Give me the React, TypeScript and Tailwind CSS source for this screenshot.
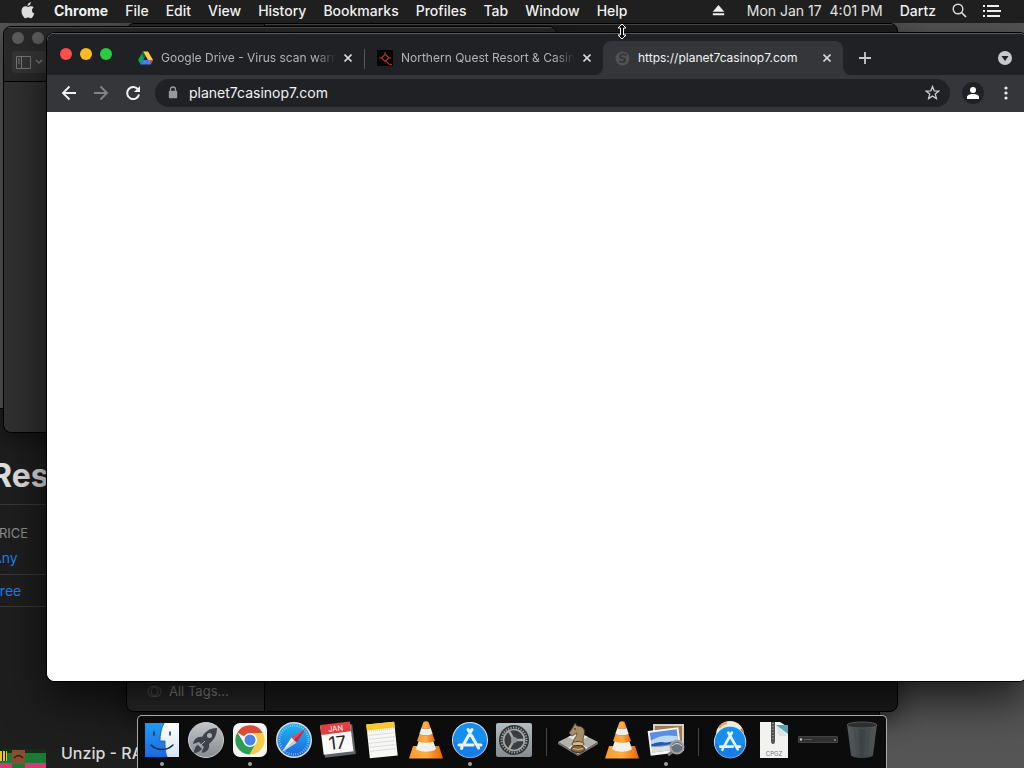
import type { ReactNode } from "react";

const menus = ["File", "Edit", "View", "History", "Bookmarks", "Profiles", "Tab", "Window", "Help"];

function MenuBar() {
  return (
    <header className="relative z-20 flex h-[23px] items-center justify-between bg-[#1f1f1f] pb-[2px] text-[14px] leading-none font-medium text-[#f0f0f0]">
      <nav className="flex items-center gap-[17px] pl-[21px]" aria-label="Menu bar">
        <button aria-label="Apple menu" className="mr-[2px] flex">
          <svg width="14" height="17" viewBox="0 0 14 17" fill="#dedede">
            <path d="M9.800.2c.1 1-.3 1.900-.9 2.600-.6.700-1.500 1.200-2.300 1.100-.1-.9.300-1.900.9-2.500C8.100.7 9.100.3 9.800.2zM12.700 5.600c-1 .6-1.700 1.600-1.700 2.900 0 1.500.9 2.600 2.300 3.100-.3 1-.8 1.900-1.400 2.800-.6.9-1.300 1.800-2.300 1.800s-1.300-.6-2.400-.6-1.500.6-2.500.6-1.700-.9-2.300-1.800C.9 12.600.2 9.700.7 7.700 1.100 5.700 2.600 4.300 4.300 4.300c1.100 0 1.900.7 2.900.7.900 0 1.700-.8 3.100-.7.900 0 1.800.5 2.400 1.300z" />
          </svg>
        </button>
        <button className="font-bold">Chrome</button>
        {menus.map((m) => (
          <button key={m}>{m}</button>
        ))}
      </nav>
      <div className="flex items-center pr-[23px]">
        <button aria-label="Eject" className="mr-[22px]">
          <svg width="13" height="11" viewBox="0 0 13 11" fill="#eee">
            <path d="M6.500 0 12.300 6.700H.7zM.8 8.300h11.400v2H.8z" />
          </svg>
        </button>
        <time className="mr-[17px] font-normal whitespace-pre text-[#e4e4e4]">Mon Jan 17  4:01 PM</time>
        <button className="mr-4">Dartz</button>
        <button aria-label="Search" className="mr-4">
          <svg width="15" height="15" viewBox="0 0 15 15" fill="none" stroke="#ddd" strokeWidth="1.400">
            <circle cx="6" cy="6" r="4.800" />
            <path d="m9.500 9.500 4.500 4.500" strokeWidth="1.700" />
          </svg>
        </button>
        <button aria-label="Notification Center">
          <svg width="18" height="12" viewBox="0 0 18 12" fill="#eee">
            <path d="M0 0h2v2H0zM0 5h2v2H0zM0 10h2v2H0zM4 0h12v2H4zM4 5h14v2H4zM4 10h13v2H4z" />
          </svg>
        </button>
      </div>
    </header>
  );
}

function StoreWindow() {
  return (
    <section className="absolute top-[408px] -bottom-10 -left-10 w-[920px] border border-black bg-[#1e1e1e] pt-[46px]">
      <h1 className="h-[49px] pl-[30px] text-[32px] leading-[42px] font-bold text-[#e0e0e0]">Res</h1>
      <div className="border-t border-[#383838] pt-5">
        <h2 className="pl-[38px] text-[13px] leading-4 text-[#8e8e90]">RICE</h2>
      </div>
      <div className="flex h-[34px] items-center border-b border-[#383838] pl-[31px] text-[14px] text-[#1f7ff0]">
        <a href="#any">Any</a>
      </div>
      <div className="flex h-[32px] items-center border-b border-[#383838] pl-[31px] text-[14px] text-[#1f7ff0]">
        <a href="#free">Free</a>
      </div>
      <div className="mt-[130px] flex">
        <svg className="mt-3 ml-[39px]" width="46" height="40" viewBox="0 0 46 40">
          <path fill="#1d7a35" d="M0 0h46v40H0z" />
          <path fill="#132d19" d="M0 0h46v4H0z" />
          <path fill="#e7c61e" d="M0 2h7v10H0z" />
          <path fill="#191510" d="M2 2h1v10H2zm3 0h1v10H5z" />
          <path fill="#8a4c32" d="M12 1h13v14H12z" />
          <path d="M14 9q5-5 9 0" stroke="#42190d" strokeWidth="1.500" fill="none" />
          <path fill="#d33c73" d="M0 14h12v6H0zm25 0h21v6H25z" />
        </svg>
        <p className="ml-[15px] text-[16px] leading-8 font-medium text-[#d9d9d9]">Unzip - RAR</p>
      </div>
    </section>
  );
}

function FinderWindow() {
  return (
    <section className="absolute top-[23px] bottom-[56px] left-[126px] flex w-[772px] overflow-hidden rounded-lg border border-black bg-[#1d1d1d] shadow-[0_8px_24px_rgba(0,0,0,0.5)]">
      <aside className="flex w-[138px] flex-col justify-end border-r border-black bg-[#292929] pb-[10px] pl-5">
        <button className="flex items-center gap-[7px] text-[13px] leading-5 text-[#8d8d8d]">
          <svg width="15" height="15" viewBox="0 0 15 15" fill="none" stroke="#5c5c5c">
            <circle cx="6" cy="7.500" r="5" />
            <circle cx="9" cy="7.500" r="5" />
          </svg>
          All Tags...
        </button>
      </aside>
      <div className="flex-1 border-t border-[#4a4a4a]" />
    </section>
  );
}

function PreviewWindow() {
  return (
    <section className="absolute top-[26px] left-[3px] h-[407px] w-[554px] overflow-hidden rounded-lg border border-black bg-[#303030] shadow-[0_8px_20px_rgba(0,0,0,0.4)]">
      <div className="h-[55px] border-t border-b border-t-[#505050] border-b-black bg-[#292929] pl-2">
        <div className="flex gap-2 pt-1">
          <span className="size-3 rounded-full bg-[#5b5b5b]" />
          <span className="size-3 rounded-full bg-[#5b5b5b]" />
        </div>
        <button aria-label="Sidebar" className="mt-[7px] flex h-[22px] w-[60px] items-center gap-1 rounded-sm bg-[#343434] pl-1 text-[#777]">
          <svg width="15" height="13" viewBox="0 0 15 13" fill="none" stroke="currentColor">
            <path d="M.5.5h14v12H.5zM5.500.5v12M2 3h2M2 5h2M2 7h2" />
          </svg>
          <svg width="8" height="6" viewBox="0 0 8 6" fill="none" stroke="currentColor" strokeWidth="1.500">
            <path d="m1 1 3 3 3-3" />
          </svg>
        </button>
      </div>
    </section>
  );
}

function DriveIcon() {
  return (
    <svg className="shrink-0" width="15" height="14" viewBox="0 0 15 14">
      <path fill="#16a05d" d="M5 .5 0 9l2.500 4.500L7.500 5z" />
      <path fill="#ffcf48" d="M5 .5h5l5 8.500h-5z" />
      <path fill="#4080f0" d="M5 9h10l-2.500 4.500h-10z" />
      <path fill="#e94235" d="M12 9h3l-2.500 4.500z" />
      <path fill="#0d6c3d" d="M5 .5 7.500 5 6 7.500 3.500 3z" />
    </svg>
  );
}

function QuestIcon() {
  return (
    <svg className="shrink-0" width="16" height="16" viewBox="0 0 16 16" fill="none">
      <path fill="#080404" d="M0 0h16v16H0z" />
      <path stroke="#a8392c" strokeWidth="1.200" d="M8 2v2.500L4.500 8 8 11.500 12 8 8.500 4.500M2 8h2.500M11.500 8H14M7 10.500c2 0 3 1 4 2.500.8 1.200 2 1.800 4 1.500" />
    </svg>
  );
}

function LoadingIcon() {
  return (
    <svg className="shrink-0" width="15" height="15" viewBox="0 0 15 15">
      <circle cx="7.500" cy="7.500" r="7" fill="#505255" />
      <path d="M11.500 4.500C8 2 3.500 4 5.500 6.300c1.500 1 4 .8 4.500 2.200.6 2-3 3.500-6 1.500" fill="none" stroke="#34363a" strokeWidth="2" />
    </svg>
  );
}

function Tab({ icon, title, active = false, fade = true }: { icon: ReactNode; title: string; active?: boolean; fade?: boolean }) {
  return (
    <div className={active ? "relative flex h-full w-[240px] min-w-0 items-center rounded-t-lg bg-[#35363a] pr-2 pl-3 text-[#f1f3f4]" : "flex h-full w-[238px] min-w-0 items-center pr-2 pl-3 text-[#b0b3b8]"}>
      {active && (
        <>
          <svg className="absolute bottom-0 -left-2" width="8" height="8" viewBox="0 0 8 8" fill="#35363a"><path d="M8 0v8H0a8 8 0 0 0 8-8z" /></svg>
          <svg className="absolute -right-2 bottom-0" width="8" height="8" viewBox="0 0 8 8" fill="#35363a"><path d="M0 0v8h8a8 8 0 0 1-8-8z" /></svg>
        </>
      )}
      <button role="tab" aria-selected={active} className="flex min-w-0 flex-1 items-center gap-2 text-left text-[12px] leading-4">
        {icon}
        <span className={fade ? "min-w-0 flex-1 overflow-hidden whitespace-nowrap [mask-image:linear-gradient(to_right,black_88%,transparent)]" : "min-w-0 flex-1 overflow-hidden whitespace-nowrap"}>{title}</span>
      </button>
      <button aria-label={"Close " + title} className="ml-1 flex size-4 shrink-0 items-center justify-center">
        <svg width="8" height="8" viewBox="0 0 8 8" stroke="#d5d7da" strokeWidth="1.600"><path d="m.5.5 7 7m0-7-7 7" /></svg>
      </button>
    </div>
  );
}

function ChromeWindow() {
  return (
    <main className="absolute top-[33px] -right-[3px] bottom-[87px] left-[47px] flex flex-col overflow-hidden rounded-[8px] bg-white shadow-[0_0_0_1px_#000,0_18px_45px_rgba(0,0,0,0.7)]">
      <div className="flex h-[42px] shrink-0 border-t border-[#55575a] bg-[#202124] pr-[15px]">
        <div className="flex w-[79px] shrink-0 gap-2 pt-[14px] pl-[13px]">
          <button aria-label="Close window" className="size-3 rounded-full bg-[#fc4f50]" />
          <button aria-label="Minimize window" className="size-3 rounded-full bg-[#fdbb22]" />
          <button aria-label="Zoom window" className="size-3 rounded-full bg-[#2bcb42]" />
        </div>
        <div role="tablist" className="flex min-w-0 items-stretch pt-[7px]">
          <Tab icon={<DriveIcon />} title="Google Drive - Virus scan warning" />
          <div className="mt-2 h-5 w-px shrink-0 bg-[#55575b]" />
          <Tab icon={<QuestIcon />} title="Northern Quest Resort & Casino" />
          <Tab icon={<LoadingIcon />} title="https://planet7casinop7.com" active fade={false} />
        </div>
        <button aria-label="New tab" className="ml-3 flex w-5 items-center justify-center pt-[7px]">
          <svg width="12" height="12" viewBox="0 0 12 12" stroke="#c8cacd" strokeWidth="1.800"><path d="M6 0v12M0 6h12" /></svg>
        </button>
        <button aria-label="Search tabs" className="ml-auto flex items-center pt-[7px]">
          <svg width="14" height="14" viewBox="0 0 14 14"><circle cx="7" cy="7" r="7" fill="#c7c9cc" /><path fill="#202124" d="M3.500 5h7L7 10z" /></svg>
        </button>
      </div>
      <div className="flex h-[37px] shrink-0 items-center bg-[#35363a] pr-3 pb-[2px] pl-[14px]">
        <button aria-label="Back" className="mr-4 shrink-0">
          <svg width="16" height="16" viewBox="0 0 16 16" fill="none" stroke="#f0f1f2" strokeWidth="1.900"><path d="M15 8H2M8.500 1.500 2 8l6.500 6.500" /></svg>
        </button>
        <button aria-label="Forward" className="mr-4 shrink-0">
          <svg width="16" height="16" viewBox="0 0 16 16" fill="none" stroke="#808286" strokeWidth="1.900"><path d="M1 8h13M7.500 1.500 14 8l-6.500 6.500" /></svg>
        </button>
        <button aria-label="Reload" className="mr-[14px] shrink-0">
          <svg width="16" height="16" viewBox="0 0 16 16" fill="none" stroke="#f0f1f2" strokeWidth="2"><path d="M13.200 4.800A6 6 0 1 0 14 9.500" /><path fill="#f0f1f2" stroke="none" d="M15 1v6H9z" /></svg>
        </button>
        <div className="flex h-7 min-w-0 flex-1 items-center rounded-full bg-[#202124] pr-[10px] pl-[13px]">
          <svg className="shrink-0" width="10" height="13" viewBox="0 0 10 13" fill="none"><path stroke="#96999e" strokeWidth="1.300" d="M2.500 6V3.500a2.500 2.500 0 0 1 5 0V6" /><rect x=".8" y="4.800" width="8.400" height="7.400" rx="1" fill="#96999e" /></svg>
          <input aria-label="Address and search bar" defaultValue="planet7casinop7.com" className="ml-[11px] min-w-0 flex-1 bg-transparent text-[14px] leading-5 text-[#f1f3f4] outline-none" />
          <button aria-label="Bookmark this page" className="shrink-0">
            <svg width="15" height="15" viewBox="0 0 15 15" fill="none" stroke="#c8cacd" strokeWidth="1.300"><path d="m7.500 1.500 1.700 4.300 4.600.3-3.500 3 1.100 4.400-3.900-2.400-3.900 2.400 1.100-4.400-3.500-3 4.600-.3z" /></svg>
          </button>
        </div>
        <button aria-label="Profile" className="ml-3 flex size-[22px] shrink-0 items-center justify-center rounded-full bg-[#202124]">
          <svg width="12" height="12" viewBox="0 0 12 12" fill="#fff"><circle cx="6" cy="3" r="3" /><path d="M0 12v-2c0-2 3-3 6-3s6 1 6 3v2z" /></svg>
        </button>
        <button aria-label="Chrome menu" className="mr-[7px] ml-5 shrink-0">
          <svg width="4" height="14" viewBox="0 0 4 14" fill="#eee"><circle cx="2" cy="2" r="1.600" /><circle cx="2" cy="7" r="1.600" /><circle cx="2" cy="12" r="1.600" /></svg>
        </button>
      </div>
      <div className="flex-1 bg-white" />
    </main>
  );
}

const Finder = () => (
  <svg width="38" height="38" viewBox="0 0 38 38">
    <defs><linearGradient id="fb" x2="0" y2="1"><stop stopColor="#1f9bf4" /><stop offset="1" stopColor="#1b6be0" /></linearGradient><linearGradient id="fw" x2="0" y2="1"><stop stopColor="#fff" /><stop offset="1" stopColor="#d5e4f0" /></linearGradient></defs>
    <path fill="url(#fw)" d="M2 2h34v34H2z" />
    <path fill="url(#fb)" d="M2 2h19c-3 6-4 12-4 18h5c0 6 0 11 2 16H2z" />
    <path fill="none" stroke="#172c4a" strokeWidth="1.500" strokeLinecap="round" d="M11 11v3M27 11v3M8 24c6 6 16 6 22 0" />
    <path fill="none" stroke="#1b558f" strokeWidth=".8" d="M21 2c-3 6-4 12-4 18h5c0 6 0 11 2 16" />
  </svg>
);

const Launchpad = () => (
  <svg width="38" height="38" viewBox="0 0 38 38">
    <defs><linearGradient id="lp" x2="0" y2="1"><stop stopColor="#c2c6ca" /><stop offset="1" stopColor="#878b90" /></linearGradient></defs>
    <circle cx="19" cy="19" r="17.500" fill="url(#lp)" stroke="#c9ccd0" />
    <path fill="#3d4349" d="M30 7c-8 0-12 4-15 9-4-1-8 2-9 7l6-2 5 5c-1 2-2 4-2 6 5-1 8-4 7-9 5-4 8-9 8-16z" />
    <path fill="#3d4349" d="M11 24c-3 1-4 5-4 8 3 0 6-2 8-4z" />
    <circle cx="22.500" cy="14.500" r="2.500" fill="#a9aeb3" />
    <path stroke="#a9aeb3" d="m13 25 5-5" />
  </svg>
);

const Chrome = () => (
  <svg width="38" height="38" viewBox="0 0 38 38">
    <rect x="2" y="2" width="34" height="34" rx="7" fill="#f7f5f2" />
    <path fill="#dc4a38" d="M19 19 6.400 11.500A14.500 14.500 0 0 1 31.700 12H19z" />
    <path fill="#f6cc46" d="M31.700 12A14.500 14.500 0 0 1 18.500 33.500L25 22 19 12z" />
    <path fill="#2c9c56" d="M6.400 11.500A14.500 14.500 0 0 0 18.500 33.500L25 22l-12 0z" />
    <circle cx="19" cy="19" r="7" fill="#fff" /><circle cx="19" cy="19" r="5.500" fill="#4583ee" />
  </svg>
);

const Safari = () => (
  <svg width="38" height="38" viewBox="0 0 38 38">
    <defs><linearGradient id="sf" x2="0" y2="1"><stop stopColor="#22b6f4" /><stop offset="1" stopColor="#1c66db" /></linearGradient></defs>
    <circle cx="19" cy="19" r="18" fill="#dadde0" /><circle cx="19" cy="19" r="16.500" fill="url(#sf)" />
    <circle cx="19" cy="19" r="14.500" fill="none" stroke="#9ddaf7" strokeWidth="2" strokeDasharray=".7 1.578" />
    <path fill="#f5f5f5" d="m7 31 9.500-14.500 5 5z" /><path fill="#c9ced3" d="m7 31 12-12 2.500 2.500z" />
    <path fill="#f04848" d="M31 7 16.500 16.500 19 19z" /><path fill="#ce2432" d="M31 7 21.500 21.500 19 19z" />
  </svg>
);

const Calendar = () => (
  <svg width="38" height="38" viewBox="0 0 38 38">
    <g transform="rotate(-7 19 19)">
      <path fill="#606367" d="M4 5h31v30H4z" /><path fill="#fafafa" d="M3 3h30v29H3z" /><path fill="#df3e42" d="M3 2h30v10H3z" />
      <text x="18" y="10" textAnchor="middle" fontSize="7.500" fill="#fff" fontFamily="Inter, sans-serif">JAN</text>
      <text x="18" y="28" textAnchor="middle" fontSize="18" fill="#252525" fontFamily="Inter, sans-serif">17</text>
    </g>
  </svg>
);

const Notes = () => (
  <svg width="38" height="38" viewBox="0 0 38 38">
    <g transform="rotate(-6 19 19)"><path fill="#f7f7f4" d="M5 2h28v34H5z" /><path fill="#f7c92d" d="M5 2h28v6H5z" /><path stroke="#d1d2d0" strokeWidth=".7" d="M6 13h26M6 17h26M6 21h26M6 25h26M6 29h26" /><path stroke="#d8cfa8" strokeDasharray="1 1" d="M5 9h28" /></g>
  </svg>
);

const Cone = ({ id }: { id: string }) => (
  <svg width="38" height="38" viewBox="0 0 38 38">
    <defs><linearGradient id={id}><stop stopColor="#f89932" /><stop offset=".5" stopColor="#ffae45" /><stop offset="1" stopColor="#e66508" /></linearGradient></defs>
    <path fill={"url(#" + id + ")"} d="M6 25h26l4 12.500H2z" />
    <path fill="#f1f0eb" d="M13.500 15h11L29 28c-4 3.500-16 3.500-20 0z" />
    <path fill={"url(#" + id + ")"} d="M16.500 1q2.500-1.500 5 0l2.200 6q-4.700 2-9.400 0zM12.500 13q6.500 3 13 0l2.500 7q-9 4-18 0z" />
    <path fill="#eeeeea" d="M14.300 7q4.700 2 9.400 0l2 6q-6.700 3-13.400 0z" />
  </svg>
);

const AppStore = ({ badge = false }: { badge?: boolean }) => (
  <svg width="38" height="38" viewBox="0 0 38 38">
    {badge && <><circle cx="19" cy="14" r="14" fill="#eee9dc" /><path d="M8 7a13 13 0 0 1 8-5" fill="none" stroke="#e6a149" strokeWidth="2" /><path d="M30 8a13 13 0 0 1 2 5" fill="none" stroke="#d8583f" strokeWidth="2" /></>}
    <g transform={badge ? "translate(2 4) scale(.9)" : undefined}>
      <circle cx="19" cy="19" r="18" fill="#d8e8f5" /><circle cx="19" cy="19" r="17" fill="#168eed" />
      <path d="M2 20a17 17 0 0 0 34 0c-8 5-25 5-34 0" fill="#1972df" opacity=".6" />
      <path fill="none" stroke="#eaf4fc" strokeWidth="3" strokeLinecap="round" d="M17 8.500 27.500 27M21 8.500 12.500 23.500M8 24h14M26.500 24h3.500M11 26.500l-.5 1" />
    </g>
  </svg>
);

const Settings = () => (
  <svg width="38" height="38" viewBox="0 0 38 38">
    <defs><linearGradient id="sg" x2="0" y2="1"><stop stopColor="#b3bdbf" /><stop offset="1" stopColor="#858b8e" /></linearGradient></defs>
    <rect x="1" y="2" width="36" height="34" rx="2" fill="url(#sg)" />
    <circle cx="19" cy="19" r="15" fill="#2f3234" /><circle cx="19" cy="19" r="12.500" fill="none" stroke="#a4a8a9" strokeWidth="2" strokeDasharray="1.200 1.418" />
    <circle cx="19" cy="19" r="10.500" fill="#3a3d3f" stroke="#a4a8a9" strokeWidth="1.700" />
    <path stroke="#a4a8a9" strokeWidth="2.500" d="M19 19h10M19 19l-5-9M19 19l-5 9" /><circle cx="19" cy="19" r="3" fill="#909496" />
  </svg>
);

const Chess = () => (
  <svg width="40" height="38" viewBox="0 0 40 38">
    <path fill="#b5b2ab" d="m0 21 20-10 20 10-20 12z" />
    <path fill="#e5e3de" d="m20 11 10 5-10 5-10-5zM10 27l10-6 10 6-10 6z" />
    <path fill="#74736f" d="m0 21 20 12v2L0 23zM40 21 20 33v2l20-12z" />
    <path fill="#a68b63" stroke="#443523" strokeWidth=".7" d="M15 22c0-4 4-6 4-10l-5 3-3-3 4-6 2-4 2 3c6 0 9 4 7 9-1 3-1 5-1 8z" />
    <ellipse cx="20" cy="23" rx="6" ry="2.500" fill="#d1b88c" stroke="#61482d" />
    <ellipse cx="20" cy="28" rx="7" ry="3.500" fill="#87683f" stroke="#3f2d1c" />
    <path stroke="#d5c096" fill="none" d="M15 27.500q5 2 10 0" /><circle cx="17" cy="8" r=".8" fill="#241a10" />
  </svg>
);

const Photos = () => (
  <svg width="38" height="38" viewBox="0 0 38 38">
    <path fill="#d7d0bf" d="M6 3h31v27H6z" /><path fill="#9a7c50" d="M8 5h27v22H8z" />
    <g transform="rotate(-7 17 20)"><path fill="#f5f5f3" d="M2 8h31v25H2z" /><path fill="#5a8ee0" d="M4 10h27v20H4z" /><path fill="#b9daf0" d="M4 18q12-6 27-1v5H4z" /><path fill="#2b579f" d="M4 22q7-3 15 0l12-1v3H4z" /><path fill="#dfdfd9" d="M4 24q15 3 27-1v7H4z" /></g>
    <circle cx="30" cy="26" r="6.500" fill="#68747c" stroke="#a2a5a7" strokeWidth="2" /><path fill="none" stroke="#d9dddf" d="M25 25q5-5 10 0" /><path stroke="#77797c" strokeWidth="3" d="m25 31-4 3" />
  </svg>
);

const Archive = () => (
  <svg width="38" height="38" viewBox="0 0 38 38">
    <path fill="#f2f2f1" d="M5 1h20l8 5v31H5z" /><path fill="#59a4b6" d="M21 4h12v9z" /><path fill="#dbe3e5" d="m20 3 13 12h-9z" />
    <path fill="#515253" d="M16 1h4v19q0 3-2 3t-2-3z" /><path stroke="#b7b8b9" strokeWidth="1" strokeDasharray="1 2" d="M18 2v17" />
    <text x="19" y="35" textAnchor="middle" fontSize="6" fill="#747677" fontFamily="Inter, sans-serif">CPGZ</text>
  </svg>
);

const Minimized = () => (
  <svg width="40" height="38" viewBox="0 0 40 38"><path fill="#303030" stroke="#414141" d="M.5 15.500h39v6H.5z" /><circle cx="3" cy="18.500" r="1.200" fill="#ccc" /><path stroke="#5a5a5a" d="M6 18.500h8" /><circle cx="37" cy="19" r="1" fill="#888" /></svg>
);

const Trash = () => (
  <svg width="38" height="38" viewBox="0 0 38 38">
    <defs><linearGradient id="tr"><stop stopColor="#555b5e" /><stop offset=".5" stopColor="#3c4144" /><stop offset="1" stopColor="#535759" /></linearGradient></defs>
    <path fill="url(#tr)" d="M4 3h30l-4 31c-1 4-21 4-22 0z" /><ellipse cx="19" cy="4" rx="15" ry="3" fill="#2b2f31" stroke="#515658" /><path stroke="#6e7375" strokeWidth=".6" fill="none" d="m9 8 3 25M14 8l2 26M24 8l-2 26M29 8l-3 25" opacity=".3" />
  </svg>
);

function DockItem({ label, running = false, children }: { label: string; running?: boolean; children: ReactNode }) {
  return (
    <button aria-label={label} className="flex w-11 shrink-0 flex-col items-center pt-[5px]">
      {children}
      {running && <span className="mt-[3px] size-1 rounded-full bg-[#a0a0a0]" />}
    </button>
  );
}

function Divider() {
  return (
    <div className="flex w-5 justify-center pt-3">
      <div className="h-7 w-px bg-[#444]" />
    </div>
  );
}

function Dock() {
  return (
    <footer className="relative z-10 mt-auto flex h-[53px] justify-center">
      <div className="flex rounded-t-[5px] border border-b-0 border-[#aaa] bg-[#0c0c0c] px-[2px]">
        <DockItem label="Finder" running><Finder /></DockItem>
        <DockItem label="Launchpad"><Launchpad /></DockItem>
        <DockItem label="Google Chrome" running><Chrome /></DockItem>
        <DockItem label="Safari"><Safari /></DockItem>
        <DockItem label="Calendar"><Calendar /></DockItem>
        <DockItem label="Notes"><Notes /></DockItem>
        <DockItem label="VLC"><Cone id="cone-a" /></DockItem>
        <DockItem label="App Store" running><AppStore /></DockItem>
        <DockItem label="System Preferences"><Settings /></DockItem>
        <Divider />
        <DockItem label="Chess"><Chess /></DockItem>
        <DockItem label="VLC media"><Cone id="cone-b" /></DockItem>
        <DockItem label="Preview" running><Photos /></DockItem>
        <Divider />
        <DockItem label="Applications"><AppStore badge /></DockItem>
        <DockItem label="Downloads"><Archive /></DockItem>
        <DockItem label="Minimized window"><Minimized /></DockItem>
        <DockItem label="Trash"><Trash /></DockItem>
      </div>
    </footer>
  );
}

export default function App() {
  return (
    <div className="relative flex h-screen w-full flex-col overflow-hidden bg-[#555] font-['Inter',sans-serif]">
      <MenuBar />
      <StoreWindow />
      <FinderWindow />
      <PreviewWindow />
      <ChromeWindow />
      <Dock />
      <svg className="absolute top-[23px] left-[617px] z-30" width="10" height="17" viewBox="0 0 10 17" aria-hidden="true">
        <path fill="#080808" stroke="#fff" strokeLinejoin="round" d="m5 1 4 4H6.500v7H9l-4 4-4-4h2.500V5H1z" />
      </svg>
    </div>
  );
}
